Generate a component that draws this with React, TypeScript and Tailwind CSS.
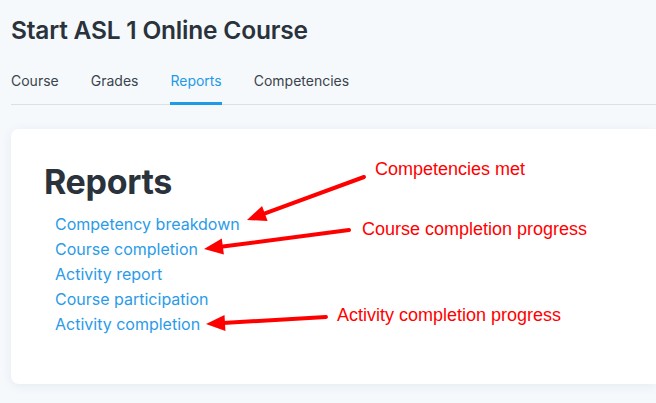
import React from "react";

const tabs = ["Course", "Grades", "Reports", "Competencies"];
const links = [
  "Competency breakdown",
  "Course completion",
  "Activity report",
  "Course participation",
  "Activity completion",
];

type Arrow = { x1: number; y1: number; x2: number; y2: number };

const arrows: Arrow[] = [
  { x1: 364, y1: 177, x2: 247, y2: 220 },
  { x1: 349, y1: 230, x2: 204, y2: 249 },
  { x1: 326, y1: 317, x2: 206, y2: 324 },
];

const ArrowShape = ({ x1, y1, x2, y2 }: Arrow) => {
  const dx = x2 - x1;
  const dy = y2 - y1;
  const len = Math.hypot(dx, dy);
  const ux = dx / len;
  const uy = dy / len;
  const headLen = 19;
  const headW = 8;
  const bx = x2 - ux * headLen;
  const by = y2 - uy * headLen;
  const p1 = `${bx - uy * headW},${by + ux * headW}`;
  const p2 = `${bx + uy * headW},${by - ux * headW}`;
  return (
    <g>
      <line
        x1={x1}
        y1={y1}
        x2={bx + ux * 2}
        y2={by + uy * 2}
        stroke="#ff0000"
        strokeWidth={4}
        strokeLinecap="round"
      />
      <polygon points={`${x2},${y2} ${p1} ${p2}`} fill="#ff0000" />
    </g>
  );
};

export default function App() {
  return (
    <div
      className="relative w-[656px] h-[403px] overflow-hidden bg-[#f5f9fc] text-[#1d2125]"
      style={{ fontFamily: "Inter, 'Noto Sans', sans-serif" }}
    >
      <div className="pl-[11px] pt-[13px]">
        <h1 className="text-[24.5px] leading-[34px] font-semibold text-[#2a323b] tracking-[-0.2px]">
          Start ASL 1 Online Course
        </h1>

        <div className="mt-[23px] flex border-b border-[#dbe0e5]">
          {tabs.map((t) => (
            <div
              key={t}
              className={`pt-[1px] pb-[11px] mr-[32px] text-[14px] leading-[20px] border-b-[3px] -mb-[1px] ${
                t === "Reports"
                  ? "text-[#1e9ae6] border-[#1e9ae6]"
                  : "text-[#3b434c] border-transparent"
              }`}
            >
              {t}
            </div>
          ))}
        </div>

        <div className="mt-[24px] h-[255px] rounded-l-[8px] bg-white shadow-[0_2px_10px_rgba(120,140,170,0.12)] pl-[33px] pt-[33px]">
          <h2 className="text-[34px] leading-[40px] font-bold text-[#2a323b] tracking-[-0.3px]">
            Reports
          </h2>
          <ul className="mt-[10px] pl-[11px]">
            {links.map((l) => (
              <li
                key={l}
                className="text-[16px] leading-[25px] text-[#2a9be8]"
              >
                {l}
              </li>
            ))}
          </ul>
        </div>
      </div>

      {/* annotations */}
      <div
        className="absolute inset-0 pointer-events-none text-[#ff0000] text-[18px] leading-[20px]"
        style={{ fontFamily: "'Liberation Sans', Arial, sans-serif" }}
      >
        <div className="absolute left-[375px] top-[159px]">Competencies met</div>
        <div className="absolute left-[362px] top-[219px]">
          Course completion progress
        </div>
        <div className="absolute left-[337px] top-[305px]">
          Activity completion progress
        </div>
        <svg className="absolute inset-0" width={656} height={403}>
          {arrows.map((a, i) => (
            <ArrowShape key={i} {...a} />
          ))}
        </svg>
      </div>
    </div>
  );
}
